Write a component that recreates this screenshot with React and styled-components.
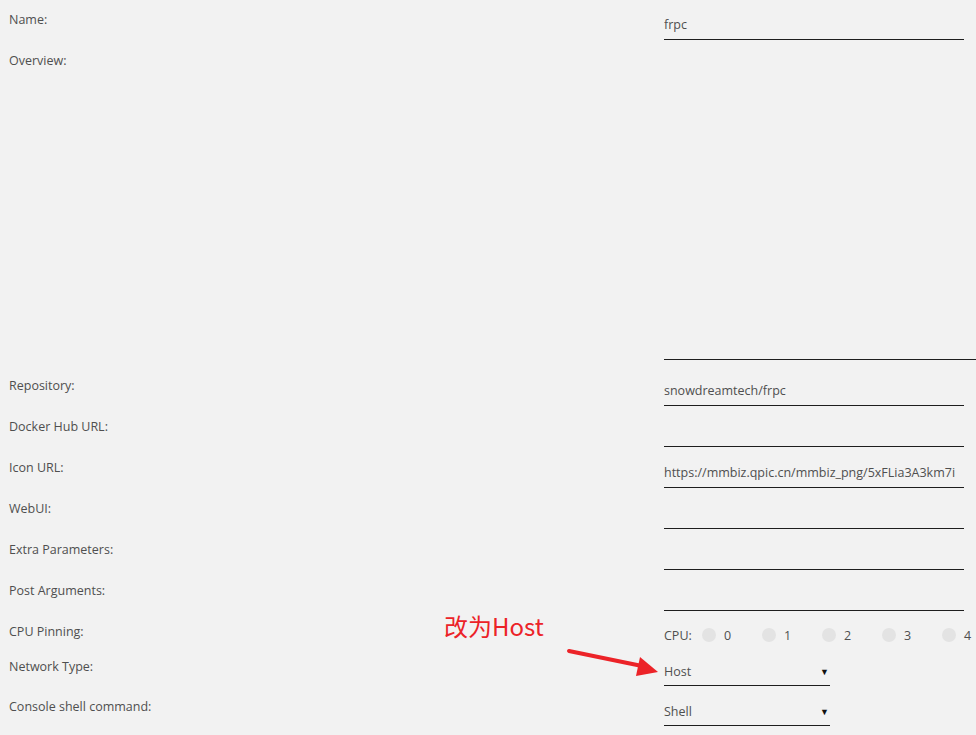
import React from 'react';
import styled, { createGlobalStyle } from 'styled-components';

const GlobalStyle = createGlobalStyle`
  html, body {
    margin: 0;
    padding: 0;
    background: #f2f2f2;
    overflow: hidden;
  }
  body {
    font-family: 'Open Sans', 'Noto Sans', sans-serif;
    font-size: 12.5px;
    color: #4f4f4f;
  }
`;

const Page = styled.div`
  position: relative;
  width: 976px;
  height: 735px;
  overflow: hidden;
`;

const Form = styled.div`
  display: flex;
  flex-direction: column;
`;

const Row = styled.div`
  display: grid;
  grid-template-columns: 664px 1fr;
  height: ${p => p.h || 41}px;
`;

const Label = styled.div`
  padding: 12px 0 0 9px;
  line-height: 16px;
`;

const Field = styled.div`
  min-width: 0;
`;

const TextInput = styled.div`
  box-sizing: border-box;
  width: 300px;
  height: 40px;
  padding: 17px 0 6px;
  line-height: 16px;
  border-bottom: 1px solid #1e1e1e;
  white-space: nowrap;
  overflow: hidden;
`;

const TextArea = styled.div`
  box-sizing: border-box;
  width: 330px;
  height: 319px;
  border-bottom: 1px solid #1e1e1e;
`;

const Select = styled.div`
  box-sizing: border-box;
  display: flex;
  justify-content: space-between;
  align-items: center;
  width: 166px;
  height: 39px;
  padding: 17px 0 5px;
  line-height: 16px;
  border-bottom: 1px solid #1e1e1e;
`;

const Caret = styled.span`
  font-size: 9px;
  color: #111;
  margin-right: 1px;
`;

const CpuList = styled.div`
  display: flex;
  align-items: center;
  height: 16px;
  margin-top: 15px;
  white-space: nowrap;
`;

const CpuLabel = styled.span`
  flex: none;
  width: 38px;
`;

const CpuItem = styled.span`
  display: flex;
  align-items: center;
  width: 60px;
  flex: none;
`;

const Dot = styled.span`
  width: 14px;
  height: 14px;
  border-radius: 50%;
  background: #e3e3e3;
  margin-right: 8px;
`;

const Note = styled.div`
  position: absolute;
  left: 444px;
  top: 610px;
  font-family: 'Noto Sans CJK SC', 'Noto Sans', sans-serif;
  font-size: 24px;
  line-height: 32px;
  color: #ec2328;
`;

const Arrow = styled.svg`
  position: absolute;
  left: 560px;
  top: 640px;
`;

const fields = [
  ['Repository:', 'snowdreamtech/frpc'],
  ['Docker Hub URL:', ''],
  ['Icon URL:', 'https://mmbiz.qpic.cn/mmbiz_png/5xFLia3A3km7i'],
  ['WebUI:', ''],
  ['Extra Parameters:', ''],
  ['Post Arguments:', '']
];

export default function App() {
  return (
    <Page>
      <GlobalStyle />
      <Form>
        <Row>
          <Label>Name:</Label>
          <Field>
            <TextInput>frpc</TextInput>
          </Field>
        </Row>
        <Row h={325}>
          <Label>Overview:</Label>
          <Field>
            <TextArea />
          </Field>
        </Row>
        {fields.map(([label, value]) => (
          <Row key={label}>
            <Label>{label}</Label>
            <Field>
              <TextInput>{value}</TextInput>
            </Field>
          </Row>
        ))}
        <Row h={35}>
          <Label>CPU Pinning:</Label>
          <Field>
            <CpuList>
              <CpuLabel>CPU:</CpuLabel>
              {[0, 1, 2, 3, 4].map(n => (
                <CpuItem key={n}>
                  <Dot />
                  {n}
                </CpuItem>
              ))}
            </CpuList>
          </Field>
        </Row>
        <Row h={40}>
          <Label>Network Type:</Label>
          <Field>
            <Select>
              Host <Caret>▼</Caret>
            </Select>
          </Field>
        </Row>
        <Row h={40}>
          <Label>Console shell command:</Label>
          <Field>
            <Select>
              Shell <Caret>▼</Caret>
            </Select>
          </Field>
        </Row>
      </Form>

      <Note>改为Host</Note>
      <Arrow width="110" height="45" viewBox="0 0 110 45">
        <line x1="9" y1="11" x2="82" y2="26" stroke="#ec2328" strokeWidth="4" strokeLinecap="round" />
        <polygon points="98,32 80,17 76,36" fill="#ec2328" />
      </Arrow>
    </Page>
  );
}
